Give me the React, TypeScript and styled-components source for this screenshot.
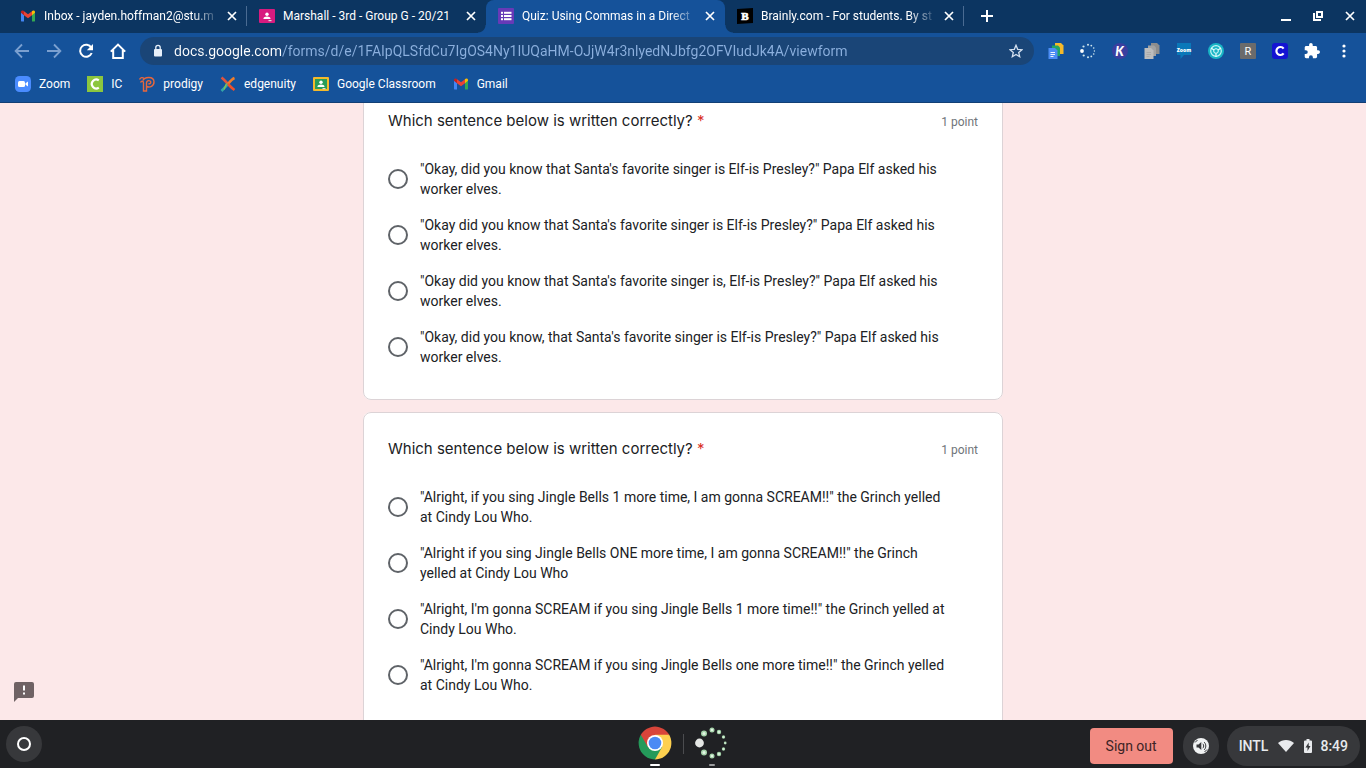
import React from "react";
import styled, { createGlobalStyle, css } from "styled-components";

const GlobalStyle = createGlobalStyle`
  *, *::before, *::after { box-sizing: border-box; }
  html, body, #root { height: 100%; margin: 0; }
  body { font-family: Roboto, "Liberation Sans", sans-serif; color: #202124; overflow: hidden; }
  button { border: 0; padding: 0; background: none; font: inherit; color: inherit; cursor: pointer; }
  svg { display: block; flex: none; }
`;

const Desktop = styled.div`
  height: 100vh;
  display: flex;
  flex-direction: column;
  background: #fce8e9;
`;

/* ---------- Tab strip ---------- */

const TabStrip = styled.header`
  display: flex;
  align-items: stretch;
  height: 33px;
  flex: none;
  padding-left: 8px;
  background: #0c3561;
  color: #fff;
`;

const Tabs = styled.div`
  display: flex;
  min-width: 0;
`;

const TabItem = styled.div<{ $active?: boolean; $divider?: boolean }>`
  position: relative;
  display: flex;
  align-items: flex-start;
  width: 239px;
  min-width: 0;
  padding: 0 9px 0 12px;
  border-radius: 8px 8px 0 0;
  ${(p) =>
    p.$active &&
    css`
      background: #15529a;
      &::before,
      &::after {
        content: "";
        position: absolute;
        bottom: 0;
        width: 8px;
        height: 8px;
      }
      &::before {
        left: -8px;
        background: radial-gradient(circle at 0 0, transparent 7px, #15529a 8px);
      }
      &::after {
        right: -8px;
        background: radial-gradient(circle at 100% 0, transparent 7px, #15529a 8px);
      }
    `}
  ${(p) =>
    p.$divider &&
    css`
      &::after {
        content: "";
        position: absolute;
        right: 0;
        top: 6px;
        width: 1px;
        height: 20px;
        background: #4a6b92;
      }
    `}
`;

const TabButton = styled.button<{ $fade?: boolean }>`
  display: flex;
  align-items: center;
  gap: 8px;
  flex: 1;
  min-width: 0;
  height: 32px;
  text-align: left;
  span {
    width: 174px;
    overflow: hidden;
    white-space: nowrap;
    font-size: 12px;
    line-height: 16px;
    ${(p) => p.$fade && css`mask-image: linear-gradient(90deg, #000 148px, transparent 176px);`}
  }
`;

const IconButton = styled.button<{ $w?: number; $dim?: boolean }>`
  display: flex;
  align-items: center;
  justify-content: center;
  flex: none;
  width: ${(p) => p.$w ?? 32}px;
  height: 32px;
  color: ${(p) => (p.$dim ? "#7ba0d0" : "#fff")};
`;

const NewTab = styled(IconButton)`
  margin-left: 7px;
`;

const WindowControls = styled.div`
  display: flex;
  margin-left: auto;
`;

/* ---------- Toolbar ---------- */

const Toolbar = styled.nav`
  display: flex;
  align-items: center;
  height: 36px;
  flex: none;
  padding: 0 6px;
  background: #15529a;
`;

const AddressBar = styled.label`
  display: flex;
  align-items: center;
  flex: 1;
  min-width: 0;
  height: 28px;
  margin: 0 6px;
  padding: 0 2px 0 12px;
  gap: 10px;
  border-radius: 14px;
  background: #1a4577;
  color: #e8f0fa;
`;

const AddressInput = styled.input`
  flex: 1;
  min-width: 0;
  padding: 0;
  border: 0;
  outline: 0;
  font: 14px/24px Roboto, "Liberation Sans", sans-serif;
  color: #8cb0de;
  background: linear-gradient(90deg, #ffffff 107px, #8cb0de 107px);
  -webkit-background-clip: text;
  background-clip: text;
  -webkit-text-fill-color: transparent;
`;

const Bookmarks = styled.nav`
  display: flex;
  align-items: center;
  gap: 17px;
  height: 34px;
  flex: none;
  padding: 0 15px 4px;
  background: #15529a;
  border-bottom: 1px solid #123f75;
`;

const Bookmark = styled.a`
  display: flex;
  align-items: center;
  gap: 8px;
  color: #fff;
  font-size: 12px;
  line-height: 16px;
  text-decoration: none;
  white-space: nowrap;
`;

/* ---------- Form ---------- */

const Page = styled.main`
  position: relative;
  flex: 1;
  min-height: 0;
  overflow: hidden;
`;

const QuestionList = styled.form`
  display: flex;
  flex-direction: column;
  gap: 12px;
  width: 100%;
  max-width: 640px;
  margin: -19px auto 0;
`;

const Card = styled.fieldset`
  min-width: 0;
  margin: 0;
  padding: 24px;
  border: 1px solid #dcd3d6;
  border-radius: 8px;
  background: #fff;
`;

const CardHead = styled.div`
  display: flex;
  justify-content: space-between;
  align-items: center;
  margin-bottom: 18px;
`;

const Title = styled.h2`
  margin: 0;
  font: 400 15px/24px Inter, Roboto, sans-serif;
  em {
    font-style: normal;
    color: #d93025;
  }
`;

const Points = styled.span`
  padding-top: 2px;
  font-size: 12px;
  line-height: 16px;
  color: #70757a;
`;

const Option = styled.label`
  display: flex;
  align-items: center;
  gap: 12px;
  padding: 8px 0;
  font-size: 14px;
  line-height: 20px;
  span {
    white-space: pre-line;
  }
`;

const Radio = styled.input`
  appearance: none;
  flex: none;
  width: 20px;
  height: 20px;
  margin: 0;
  border: 2px solid #5f6368;
  border-radius: 50%;
`;

const Feedback = styled.button`
  position: absolute;
  left: 14px;
  bottom: 18px;
`;

/* ---------- Shelf ---------- */

const Shelf = styled.footer`
  display: grid;
  grid-template-columns: 1fr auto 1fr;
  align-items: center;
  height: 48px;
  flex: none;
  padding: 0 6px;
  background: #202124;
  color: #e8eaed;
`;

const Launcher = styled.button`
  display: flex;
  align-items: center;
  justify-content: center;
  width: 36px;
  height: 36px;
  border-radius: 50%;
  background: #37383b;
`;

const Apps = styled.div`
  display: flex;
  align-items: center;
  gap: 11px;
`;

const AppButton = styled.button<{ $active?: boolean }>`
  display: flex;
  flex-direction: column;
  align-items: center;
  justify-content: flex-end;
  gap: 4px;
  width: 34px;
  height: 48px;
  padding-bottom: 2px;
  &::after {
    content: "";
    width: ${(p) => (p.$active ? 10 : 6)}px;
    height: 2px;
    border-radius: 1px;
    background: ${(p) => (p.$active ? "#fff" : "#9a9b9d")};
  }
`;

const Rule = styled.span`
  width: 1px;
  height: 20px;
  background: #4b4c4f;
`;

const Tray = styled.div`
  display: flex;
  align-items: center;
  justify-content: flex-end;
  padding-top: 4px;
`;

const SignOut = styled.button`
  height: 36px;
  padding: 0 16px;
  border-radius: 4px;
  background: #f28b82;
  color: #3c2325;
  font-size: 14px;
`;

const Sound = styled.button`
  display: flex;
  align-items: center;
  justify-content: center;
  width: 36px;
  height: 38px;
  margin: 0 8px 0 10px;
  border-radius: 18px;
  background: #37383b;
`;

const Status = styled.button`
  display: flex;
  align-items: center;
  gap: 8px;
  height: 40px;
  padding: 0 12px;
  border-radius: 20px;
  background: #37383b;
  color: #e8eaed;
  font-size: 14px;
  font-weight: 500;
`;

const Signal = styled.svg`
  margin: 0 2px;
`;

/* ---------- Icons ---------- */

const GmailIcon = () => (
  <svg width="16" height="16" viewBox="0 0 16 16">
    <path d="M1 13V4.6l3 2.2V13.6H2a1 1 0 0 1-1-.6z" fill="#4285f4" />
    <path d="M15 13V4.6l-3 2.2v6.8h2a1 1 0 0 0 1-.6z" fill="#34a853" />
    <path d="M4 3.2l4 3 4-3v4L8 10.2l-4-3z" fill="#ea4335" />
    <path d="M1 4.7V4c0-1.6 1.8-2 3-.9v4.1z" fill="#c5221f" />
    <path d="M15 4.7V4c0-1.6-1.8-2-3-.9v4.1z" fill="#fbbc04" />
  </svg>
);

const ClassroomIcon = ({ frame, board }: { frame: string; board: string }) => (
  <svg width="16" height="16" viewBox="0 0 16 16">
    <rect y="1" width="16" height="14" rx="1" fill={frame} />
    <rect x="2" y="3" width="12" height="10" fill={board} />
    <circle cx="8" cy="6.2" r="1.7" fill="#fff" />
    <path d="M4.4 11c0-1.8 1.9-2.5 3.6-2.5s3.6.7 3.6 2.5z" fill="#fff" />
    <rect x="9.5" y="12" width="3" height="1.2" fill="#ddd" />
  </svg>
);

const FormsIcon = () => (
  <svg width="16" height="16" viewBox="0 0 16 16">
    <rect width="16" height="16" rx="1" fill="#673ab7" />
    <g fill="#fff">
      <rect x="3" y="3.8" width="2" height="2" />
      <rect x="3" y="7" width="2" height="2" />
      <rect x="3" y="10.2" width="2" height="2" />
      <rect x="6" y="3.8" width="7.5" height="2" />
      <rect x="6" y="7" width="7.5" height="2" />
      <rect x="6" y="10.2" width="7.5" height="2" />
    </g>
  </svg>
);

const BrainlyIcon = () => (
  <svg width="16" height="16" viewBox="0 0 16 16">
    <path d="M0 1l16-1v15L0 16z" fill="#000" />
    <text x="8" y="12" textAnchor="middle" fontFamily="Liberation Serif" fontWeight="700" fontSize="11" fill="#fff" stroke="#fff" strokeWidth=".7">B</text>
  </svg>
);

const CloseIcon = ({ size = 10 }: { size?: number }) => (
  <svg width={size} height={size} viewBox="0 0 10 10" stroke="currentColor" strokeWidth="1.7">
    <path d="M1 1l8 8M9 1L1 9" />
  </svg>
);

const PlusIcon = () => (
  <svg width="12" height="12" viewBox="0 0 12 12" stroke="currentColor" strokeWidth="2">
    <path d="M6 0v12M0 6h12" />
  </svg>
);

const MinimizeIcon = () => (
  <svg width="12" height="12" viewBox="0 0 12 12">
    <path d="M1 9h10v2H1z" fill="currentColor" />
  </svg>
);

const RestoreIcon = () => (
  <svg width="12" height="12" viewBox="0 0 12 12" fill="none" stroke="currentColor" strokeWidth="2">
    <path d="M5 2h5v5H5zM2 3v7h7" />
  </svg>
);

const ArrowIcon = ({ flip }: { flip?: boolean }) => (
  <svg width="16" height="16" viewBox="0 0 16 16" fill="none" stroke="currentColor" strokeWidth="1.8">
    <path d={flip ? "M1 8h13M8 1.5L14.4 8 8 14.5" : "M15 8H2M8 1.5L1.6 8 8 14.5"} />
  </svg>
);

const ReloadIcon = () => (
  <svg width="16" height="16" viewBox="0 0 16 16">
    <path d="M13.3 4.7A6 6 0 1 0 13.7 10" fill="none" stroke="currentColor" strokeWidth="2" />
    <path d="M15 1v6.2H8.8z" fill="currentColor" />
  </svg>
);

const HomeIcon = () => (
  <svg width="16" height="16" viewBox="0 0 16 16" fill="none" stroke="currentColor" strokeWidth="2">
    <path d="M.8 8.6L8 1.6l7.2 7M3.2 7v8h9.6V7" />
  </svg>
);

const LockIcon = () => (
  <svg width="12" height="14" viewBox="0 0 12 14">
    <rect x="2" y="5" width="8" height="7.5" rx="1" fill="currentColor" />
    <path d="M3.8 6V3.6a2.2 2.2 0 0 1 4.4 0V6" fill="none" stroke="currentColor" strokeWidth="1.3" />
  </svg>
);

const StarIcon = () => (
  <svg width="14" height="14" viewBox="0 0 14 14" fill="none" stroke="#d5e1f0" strokeWidth="1.3">
    <path d="M7 1.3l1.7 4 4.3.4-3.3 2.8 1 4.2L7 10.5l-3.7 2.2 1-4.2L1 5.7l4.3-.4z" />
  </svg>
);

const DocsStackIcon = ({ gray }: { gray?: boolean }) => (
  <svg width="16" height="16" viewBox="0 0 16 16">
    <path d="M7 0h6l2.5 2.5V11H7z" fill={gray ? "#8d8d8d" : "#f4b92b"} />
    <path d="M4 2.5h6l2 2V13H4z" fill={gray ? "#a3a3a3" : "#21a566"} />
    <path d="M.5 5h6.5L9.5 7.5V16h-9z" fill={gray ? "#bdbdbd" : "#4c8df6"} />
    <path d="M2.5 9.5h4.5M2.5 11.5h4.5M2.5 13.5h3" stroke={gray ? "#a9a9a9" : "#fff"} strokeWidth=".9" />
  </svg>
);

const SpinnerIcon = () => (
  <svg width="16" height="16" viewBox="0 0 16 16" fill="#cfe6ee">
    <circle cx="2" cy="8" r="1.9" fill="#fff" />
    {[[3.5, 3.5, 1.1], [8, 1.7, 1], [11.3, 2.6, 0.9], [13.7, 5, 0.8], [14.4, 8, 0.7], [13.7, 11, 0.8], [11.3, 13.4, 0.9], [8, 14.3, 1], [3.7, 12.5, 1.1]].map(([x, y, r]) => (
      <circle key={`${x}-${y}`} cx={x} cy={y} r={r} />
    ))}
  </svg>
);

const letterProps = { textAnchor: "middle" as const, fill: "#fff" };

const KamiIcon = () => (
  <svg width="16" height="16" viewBox="0 0 16 16">
    <circle cx="8" cy="8" r="8" fill="#3b3f9f" />
    <text x="7.5" y="12.5" {...letterProps} fontFamily="Lato" fontWeight="900" fontStyle="italic" fontSize="13">K</text>
  </svg>
);

const ZoomExtIcon = () => (
  <svg width="16" height="16" viewBox="0 0 16 16">
    <path d="M1 0h14v12H8l-3.5 4v-4H1z" fill="#0a78b9" />
    <text x="8" y="8.5" {...letterProps} fontFamily="Open Sans" fontWeight="800" fontSize="5">Zoom</text>
  </svg>
);

const TealIcon = () => (
  <svg width="16" height="16" viewBox="0 0 16 16">
    <circle cx="8" cy="8" r="8" fill="#19b5c5" />
    <circle cx="8" cy="8" r="5.3" fill="none" stroke="#c7f5f5" strokeWidth="1.2" />
    <circle cx="8" cy="8" r="2.3" fill="none" stroke="#e6ffff" strokeWidth="1" />
    <path d="M3 5l3 2M13 5l-3 2M8 10.5V14" stroke="#e6ffff" strokeWidth="1.2" />
  </svg>
);

const ReadIcon = () => (
  <svg width="16" height="16" viewBox="0 0 16 16">
    <rect width="16" height="16" rx="1" fill="#6b6b6b" />
    <text x="8" y="12" {...letterProps} fontFamily="Roboto" fontSize="11">R</text>
  </svg>
);

const CleverIcon = () => (
  <svg width="16" height="16" viewBox="0 0 16 16">
    <rect width="16" height="16" rx="3" fill="#1414d2" />
    <path d="M11.6 5.6A4 4 0 1 0 11.6 10.4" fill="none" stroke="#fff" strokeWidth="2.2" />
  </svg>
);

const PuzzleIcon = () => (
  <svg width="16" height="16" viewBox="1 1 22 22" fill="currentColor">
    <path d="M20.5 11H19V7c0-1.100-.9-2-2-2h-4V3.500a2.500 2.500 0 0 0-5 0V5H4c-1.100 0-2 .9-2 2v3.800h1.500a2.700 2.700 0 0 1 0 5.400H2V20c0 1.100.9 2 2 2h3.800v-1.500a2.700 2.700 0 0 1 5.400 0V22H17c1.100 0 2-.9 2-2v-4h1.500a2.500 2.500 0 0 0 0-5z" />
  </svg>
);

const DotsIcon = () => (
  <svg width="4" height="14" viewBox="0 0 4 14" fill="currentColor">
    <circle cx="2" cy="2" r="1.6" />
    <circle cx="2" cy="7" r="1.6" />
    <circle cx="2" cy="12" r="1.6" />
  </svg>
);

const ZoomIcon = () => (
  <svg width="16" height="16" viewBox="0 0 16 16">
    <rect width="16" height="16" rx="4.5" fill="#4a8cff" />
    <rect x="3" y="5" width="7" height="6" rx="1.5" fill="#fff" />
    <path d="M10.5 7.3L13 5.5v5l-2.5-1.8z" fill="#fff" />
  </svg>
);

const CampusIcon = () => (
  <svg width="16" height="16" viewBox="0 0 16 16">
    <rect width="16" height="16" fill="#8cc63f" />
    <path d="M11.8 4.4A4.4 4.4 0 1 0 11.8 11.6" fill="none" stroke="#fff" strokeWidth="2.2" />
  </svg>
);

const ProdigyIcon = () => (
  <svg width="16" height="16" viewBox="0 0 16 16" fill="none" stroke="#e8673c" strokeWidth="1.4">
    <path d="M.5 3.500C1.500 1.500 3.500 1 5 2.500M1.500 6.500c1-2 3-1.500 3 .5v8h3V11" />
    <path d="M4 4.500C5 1 14.700-.5 15 5.800c.2 4.400-4.300 6.200-7.500 4.700V7c0-3 4.300-3 4.300-.7 0 1.600-1.600 1.800-2.300 1.200" />
  </svg>
);

const EdgenuityIcon = () => (
  <svg width="16" height="16" viewBox="0 0 16 16" fill="none" strokeWidth="2.6">
    <path d="M1.5 1.5C4 3.500 6 6 8 8" stroke="#e0533d" />
    <path d="M8 8c-2 2-4 4.500-6.500 7" stroke="#34a6a8" />
    <path d="M8 8c2-2.500 4-5 6.500-6" stroke="#ee7d2b" />
    <path d="M8 8c2 2 3.500 4 6.500 6" stroke="#f0502b" />
    <path d="M6.500 7.500L4 13.500" stroke="#8bc34a" strokeWidth="1.2" />
  </svg>
);

const FeedbackIcon = () => (
  <svg width="20" height="20" viewBox="0 0 20 20">
    <path d="M2 0h16a2 2 0 0 1 2 2v12a2 2 0 0 1-2 2H4l-4 4V2a2 2 0 0 1 2-2z" fill="#6f6264" />
    <path d="M9 3.500h2v5H9zM9 10.500h2v2H9z" fill="#fff" />
  </svg>
);

const LauncherIcon = () => (
  <svg width="16" height="16" viewBox="0 0 16 16">
    <circle cx="8" cy="8" r="6" fill="none" stroke="#fff" strokeWidth="2" />
  </svg>
);

const ChromeIcon = () => (
  <svg width="34" height="34" viewBox="-17 -17 34 34">
    <path d="M0 0L-14.2-8.2A16.4 16.4 0 0 1 14.2-8.2z" fill="#d8453a" />
    <path d="M0 0L-14.2-8.2A16.4 16.4 0 0 0 0 16.4z" fill="#249a5a" />
    <path d="M0 0L0 16.4A16.4 16.4 0 0 0 14.2-8.2z" fill="#fdd04f" />
    <path d="M0-8.2H14.2L6 2z" fill="#fdd04f" />
    <path d="M-14.2-8.2L-7.1 4.1 0 0V-8.2z" fill="#d8453a" />
    <path d="M7.1 4.1L0 16.4-7.1 4.1 0 0z" fill="#249a5a" />
    <circle r="8" fill="#fff" />
    <circle r="6.3" fill="#4a8af4" />
  </svg>
);

const LoaderIcon = () => (
  <svg width="34" height="34" viewBox="-17 -17 34 34" fill="#a5d3aa">
    <circle cx="-12.5" cy="0" r="4.4" fill="#e4e6e4" />
    {[[-8, -9.5, 3], [0, -13, 2.5], [7, -11, 2.2], [11.5, -6, 1.7], [13.2, 0, 1.4], [11.5, 6, 1.7], [7, 11, 2.2], [0, 13, 2.5], [-8, 9.5, 3]].map(([x, y, r]) => (
      <g key={`${x}:${y}`}>
        <circle cx={x} cy={y} r={r} />
        <circle cx={x} cy={y} r={r / 2} fill="#e3f5e4" />
      </g>
    ))}
  </svg>
);

const SoundIcon = () => (
  <svg width="16" height="16" viewBox="0 0 16 16">
    <circle cx="8" cy="8" r="8" fill="#f1f3f4" />
    <path d="M3.5 6.500h2L8.300 4v8L5.500 9.500h-2z" fill="#37383b" />
    <path d="M9.800 5.800c1.200 1 1.200 3.400 0 4.400M11 4c2.400 2 2.400 6 0 8M2 4.500L4.500 2M11.500 14l2.500-2.500" stroke="#37383b" fill="none" />
  </svg>
);

const WifiIcon = () => (
  <Signal width="16" height="12" viewBox="0 0 16 12">
    <path d="M0 3C4.5-1 11.5-1 16 3L8 12z" fill="currentColor" />
  </Signal>
);

const BatteryIcon = () => (
  <svg width="8" height="14" viewBox="0 0 8 14">
    <path d="M2.500 0h3v1.500H7a1 1 0 0 1 1 1V13a1 1 0 0 1-1 1H1a1 1 0 0 1-1-1V2.500a1 1 0 0 1 1-1h1.500z" fill="currentColor" />
    <path d="M4.700 3.500L1.500 8.500h2v3.500l3-5h-1.800z" fill="#37383b" />
  </svg>
);

/* ---------- Data ---------- */

const tabs = [
  { title: "Inbox - jayden.hoffman2@stu.m", icon: <GmailIcon />, fade: true, divider: true },
  { title: "Marshall - 3rd - Group G - 20/21", icon: <ClassroomIcon frame="#d81b7f" board="#d81b7f" /> },
  { title: "Quiz: Using Commas in a Direct", icon: <FormsIcon />, active: true, fade: true },
  { title: "Brainly.com - For students. By st", icon: <BrainlyIcon />, fade: true, divider: true },
];

const bookmarks = [
  { name: "Zoom", icon: <ZoomIcon /> },
  { name: "IC", icon: <CampusIcon /> },
  { name: "prodigy", icon: <ProdigyIcon /> },
  { name: "edgenuity", icon: <EdgenuityIcon /> },
  { name: "Google Classroom", icon: <ClassroomIcon frame="#f4b92b" board="#2a9d58" /> },
  { name: "Gmail", icon: <GmailIcon /> },
];

const extensions = [
  { name: "Docs offline", icon: <DocsStackIcon /> },
  { name: "Loader", icon: <SpinnerIcon /> },
  { name: "Kami", icon: <KamiIcon /> },
  { name: "Documents", icon: <DocsStackIcon gray /> },
  { name: "Zoom scheduler", icon: <ZoomExtIcon /> },
  { name: "Screen helper", icon: <TealIcon /> },
  { name: "Reader", icon: <ReadIcon /> },
  { name: "Clever", icon: <CleverIcon /> },
  { name: "Extensions", icon: <PuzzleIcon /> },
  { name: "Menu", icon: <DotsIcon /> },
];

const questions = [
  [
    "\"Okay, did you know that Santa's favorite singer is Elf-is Presley?\" Papa Elf asked his\nworker elves.",
    "\"Okay did you know that Santa's favorite singer is Elf-is Presley?\" Papa Elf asked his\nworker elves.",
    "\"Okay did you know that Santa's favorite singer is, Elf-is Presley?\" Papa Elf asked his\nworker elves.",
    "\"Okay, did you know, that Santa's favorite singer is Elf-is Presley?\" Papa Elf asked his\nworker elves.",
  ],
  [
    "\"Alright, if you sing Jingle Bells 1 more time, I am gonna SCREAM!!\" the Grinch yelled\nat Cindy Lou Who.",
    "\"Alright if you sing Jingle Bells ONE more time, I am gonna SCREAM!!\" the Grinch\nyelled at Cindy Lou Who",
    "\"Alright, I'm gonna SCREAM if you sing Jingle Bells 1 more time!!\" the Grinch yelled at\nCindy Lou Who.",
    "\"Alright, I'm gonna SCREAM if you sing Jingle Bells one more time!!\" the Grinch yelled\nat Cindy Lou Who.",
  ],
];

export default function App() {
  return (
    <Desktop>
      <GlobalStyle />
      <TabStrip>
        <Tabs>
          {tabs.map((t) => (
            <TabItem key={t.title} $active={t.active} $divider={t.divider}>
              <TabButton $fade={t.fade}>
                {t.icon}
                <span>{t.title}</span>
              </TabButton>
              <IconButton $w={12} aria-label="Close tab">
                <CloseIcon />
              </IconButton>
            </TabItem>
          ))}
        </Tabs>
        <NewTab aria-label="New tab">
          <PlusIcon />
        </NewTab>
        <WindowControls>
          <IconButton aria-label="Minimize"><MinimizeIcon /></IconButton>
          <IconButton aria-label="Restore"><RestoreIcon /></IconButton>
          <IconButton aria-label="Close"><CloseIcon /></IconButton>
        </WindowControls>
      </TabStrip>

      <Toolbar aria-label="Browser">
        <IconButton $dim aria-label="Back"><ArrowIcon /></IconButton>
        <IconButton $dim aria-label="Forward"><ArrowIcon flip /></IconButton>
        <IconButton aria-label="Reload"><ReloadIcon /></IconButton>
        <IconButton aria-label="Home"><HomeIcon /></IconButton>
        <AddressBar>
          <LockIcon />
          <AddressInput
            aria-label="Address"
            defaultValue="docs.google.com/forms/d/e/1FAIpQLSfdCu7IgOS4Ny1IUQaHM-OJjW4r3nlyedNJbfg2OFVIudJk4A/viewform"
          />
          <IconButton aria-label="Bookmark this page"><StarIcon /></IconButton>
        </AddressBar>
        {extensions.map((e) => (
          <IconButton key={e.name} aria-label={e.name}>{e.icon}</IconButton>
        ))}
      </Toolbar>

      <Bookmarks aria-label="Bookmarks">
        {bookmarks.map((b) => (
          <Bookmark key={b.name} href="#">
            {b.icon}
            {b.name}
          </Bookmark>
        ))}
      </Bookmarks>

      <Page>
        <QuestionList>
          {questions.map((options, q) => (
            <Card key={q} aria-labelledby={`question-${q}`}>
              <CardHead>
                <Title id={`question-${q}`}>
                  Which sentence below is written correctly? <em>*</em>
                </Title>
                <Points>1 point</Points>
              </CardHead>
              {options.map((text) => (
                <Option key={text}>
                  <Radio type="radio" name={`question-${q}`} />
                  <span>{text}</span>
                </Option>
              ))}
            </Card>
          ))}
        </QuestionList>
        <Feedback aria-label="Report a problem"><FeedbackIcon /></Feedback>
      </Page>

      <Shelf>
        <Launcher aria-label="Launcher"><LauncherIcon /></Launcher>
        <Apps>
          <AppButton $active aria-label="Chrome"><ChromeIcon /></AppButton>
          <Rule />
          <AppButton aria-label="Loader"><LoaderIcon /></AppButton>
        </Apps>
        <Tray>
          <SignOut>Sign out</SignOut>
          <Sound aria-label="Sound"><SoundIcon /></Sound>
          <Status>
            <span>INTL</span>
            <WifiIcon />
            <BatteryIcon />
            <span>8:49</span>
          </Status>
        </Tray>
      </Shelf>
    </Desktop>
  );
}
